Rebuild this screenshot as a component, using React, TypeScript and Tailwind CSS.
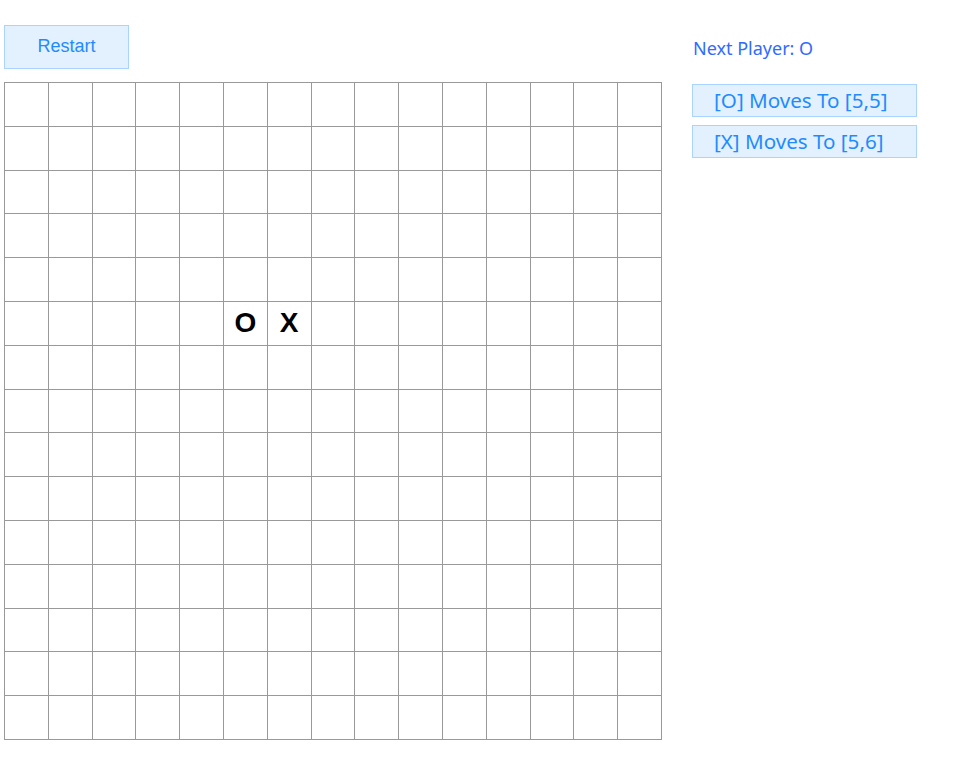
import React from 'react'

const SIZE = 15
const moves: { r: number; c: number; p: string }[] = [
  { r: 5, c: 5, p: 'O' },
  { r: 5, c: 6, p: 'X' },
]

export default function App() {
  const board: string[][] = Array.from({ length: SIZE }, () => Array(SIZE).fill(''))
  moves.forEach((m) => (board[m.r][m.c] = m.p))

  return (
    <div className="flex bg-white min-h-[760px] w-[971px]" style={{ fontFamily: '"Liberation Sans", Arial, sans-serif' }}>
      <div className="pl-1 pt-[25px]">
        <button className="w-[125px] h-[44px] pb-[2px] bg-[#e3f1ff] border border-[#a8d4ff] text-[#1f8bff] text-[18px] leading-none">
          Restart
        </button>
        <div className="mt-[13px] w-[658px] h-[658px] grid grid-cols-[repeat(15,1fr)] grid-rows-[repeat(15,1fr)] border-l border-t border-[#999]">
          {board.flat().map((v, i) => (
            <div key={i} className="border-r border-b border-[#999] flex items-center justify-center text-[28px] font-bold text-black">
              {v}
            </div>
          ))}
        </div>
      </div>
      <div className="ml-[30px] pt-[36px]" style={{ fontFamily: '"Noto Sans", "Open Sans", sans-serif' }}>
        <div className="text-[18px] leading-[24px] text-[#2f6bff] pl-[1px]">Next Player: O</div>
        <div className="mt-[24px] flex flex-col gap-[8px]">
          {moves.map((m, i) => (
            <div key={i} className="w-[225px] h-[33px] bg-[#e3f1ff] border border-[#a8d4ff] text-[#1f8bff] text-[20.6px] leading-none flex items-center pl-[21px]">
              [{m.p}] Moves To [{m.r},{m.c}]
            </div>
          ))}
        </div>
      </div>
    </div>
  )
}
